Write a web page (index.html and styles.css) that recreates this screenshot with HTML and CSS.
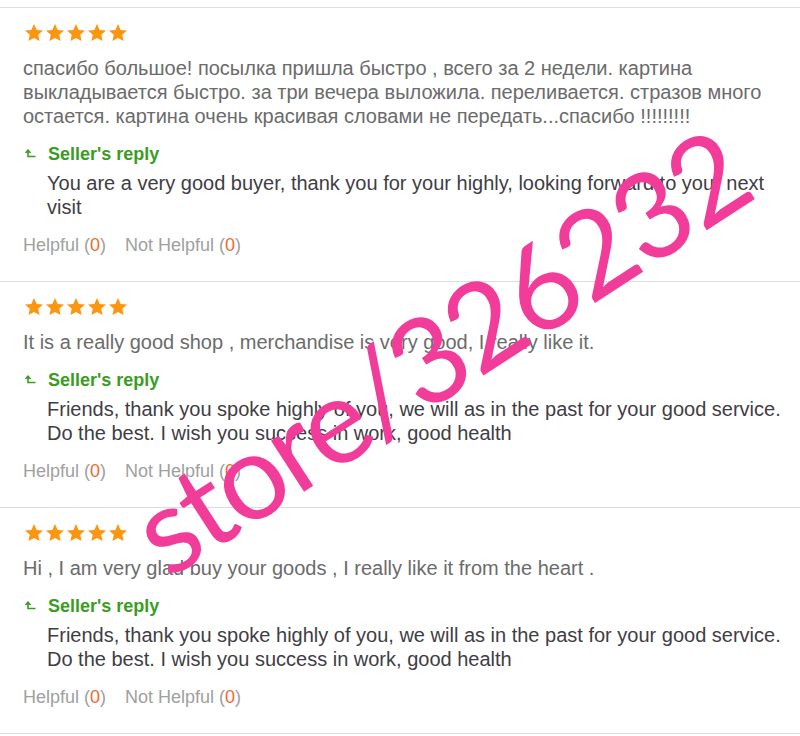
FILE: index.html
```html
<!DOCTYPE html>
<html lang="en">
<head>
<meta charset="UTF-8">
<meta name="viewport" content="width=device-width, initial-scale=1.0">
<title>Feedback</title>
<link rel="stylesheet" href="styles.css">
</head>
<body>
<div class="feedback-list">

  <div class="review">
    <div class="stars">
      <svg viewBox="0 0 20 20"><path d="M10 1l2.7 5.9 6.3.6-4.8 4.3 1.4 6.3L10 14.9 4.4 18.1l1.4-6.3L1 7.5l6.3-.6z"/></svg>
      <svg viewBox="0 0 20 20"><path d="M10 1l2.7 5.9 6.3.6-4.8 4.3 1.4 6.3L10 14.9 4.4 18.1l1.4-6.3L1 7.5l6.3-.6z"/></svg>
      <svg viewBox="0 0 20 20"><path d="M10 1l2.7 5.9 6.3.6-4.8 4.3 1.4 6.3L10 14.9 4.4 18.1l1.4-6.3L1 7.5l6.3-.6z"/></svg>
      <svg viewBox="0 0 20 20"><path d="M10 1l2.7 5.9 6.3.6-4.8 4.3 1.4 6.3L10 14.9 4.4 18.1l1.4-6.3L1 7.5l6.3-.6z"/></svg>
      <svg viewBox="0 0 20 20"><path d="M10 1l2.7 5.9 6.3.6-4.8 4.3 1.4 6.3L10 14.9 4.4 18.1l1.4-6.3L1 7.5l6.3-.6z"/></svg>
    </div>
    <p class="review-text">спасибо большое! посылка пришла быстро , всего за 2 недели. картина выкладывается быстро. за три вечера выложила. переливается. стразов много остается. картина очень красивая словами не передать...спасибо !!!!!!!!!</p>
    <div class="reply-title">
      <svg class="reply-icon" viewBox="0 0 12 10"><path d="M1.5 4L4 1.3 6.5 4M4 1.5V7.5H11.5"/></svg>
      Seller's reply
    </div>
    <p class="reply-text">You are a very good buyer, thank you for your highly, looking forward to your next visit</p>
    <div class="helpful">Helpful (<span class="count">0</span>)<span class="gap"></span>Not Helpful (<span class="count">0</span>)</div>
  </div>

  <div class="review">
    <div class="stars">
      <svg viewBox="0 0 20 20"><path d="M10 1l2.7 5.9 6.3.6-4.8 4.3 1.4 6.3L10 14.9 4.4 18.1l1.4-6.3L1 7.5l6.3-.6z"/></svg>
      <svg viewBox="0 0 20 20"><path d="M10 1l2.7 5.9 6.3.6-4.8 4.3 1.4 6.3L10 14.9 4.4 18.1l1.4-6.3L1 7.5l6.3-.6z"/></svg>
      <svg viewBox="0 0 20 20"><path d="M10 1l2.7 5.9 6.3.6-4.8 4.3 1.4 6.3L10 14.9 4.4 18.1l1.4-6.3L1 7.5l6.3-.6z"/></svg>
      <svg viewBox="0 0 20 20"><path d="M10 1l2.7 5.9 6.3.6-4.8 4.3 1.4 6.3L10 14.9 4.4 18.1l1.4-6.3L1 7.5l6.3-.6z"/></svg>
      <svg viewBox="0 0 20 20"><path d="M10 1l2.7 5.9 6.3.6-4.8 4.3 1.4 6.3L10 14.9 4.4 18.1l1.4-6.3L1 7.5l6.3-.6z"/></svg>
    </div>
    <p class="review-text">It is a really good shop , merchandise is very good, I really like it.</p>
    <div class="reply-title">
      <svg class="reply-icon" viewBox="0 0 12 10"><path d="M1.5 4L4 1.3 6.5 4M4 1.5V7.5H11.5"/></svg>
      Seller's reply
    </div>
    <p class="reply-text">Friends, thank you spoke highly of you, we will as in the past for your good service. Do the best. I wish you success in work, good health</p>
    <div class="helpful">Helpful (<span class="count">0</span>)<span class="gap"></span>Not Helpful (<span class="count">0</span>)</div>
  </div>

  <div class="review">
    <div class="stars">
      <svg viewBox="0 0 20 20"><path d="M10 1l2.7 5.9 6.3.6-4.8 4.3 1.4 6.3L10 14.9 4.4 18.1l1.4-6.3L1 7.5l6.3-.6z"/></svg>
      <svg viewBox="0 0 20 20"><path d="M10 1l2.7 5.9 6.3.6-4.8 4.3 1.4 6.3L10 14.9 4.4 18.1l1.4-6.3L1 7.5l6.3-.6z"/></svg>
      <svg viewBox="0 0 20 20"><path d="M10 1l2.7 5.9 6.3.6-4.8 4.3 1.4 6.3L10 14.9 4.4 18.1l1.4-6.3L1 7.5l6.3-.6z"/></svg>
      <svg viewBox="0 0 20 20"><path d="M10 1l2.7 5.9 6.3.6-4.8 4.3 1.4 6.3L10 14.9 4.4 18.1l1.4-6.3L1 7.5l6.3-.6z"/></svg>
      <svg viewBox="0 0 20 20"><path d="M10 1l2.7 5.9 6.3.6-4.8 4.3 1.4 6.3L10 14.9 4.4 18.1l1.4-6.3L1 7.5l6.3-.6z"/></svg>
    </div>
    <p class="review-text">Hi , I am very glad buy your goods , I really like it from the heart .</p>
    <div class="reply-title">
      <svg class="reply-icon" viewBox="0 0 12 10"><path d="M1.5 4L4 1.3 6.5 4M4 1.5V7.5H11.5"/></svg>
      Seller's reply
    </div>
    <p class="reply-text">Friends, thank you spoke highly of you, we will as in the past for your good service. Do the best. I wish you success in work, good health</p>
    <div class="helpful">Helpful (<span class="count">0</span>)<span class="gap"></span>Not Helpful (<span class="count">0</span>)</div>
  </div>

</div>
<div class="watermark">store/326232</div>
</body>
</html>
```

FILE: styles.css
```css
body {
  margin: 0;
  padding-top: 7px;
  background-color: #fff;
  font-family: 'Liberation Sans', Arial, sans-serif;
  font-size: 18px;
  line-height: 24px;
  overflow: hidden;
}
.feedback-list {
  border-bottom: 1px solid #dcdcdc;
}
.review {
  border-top: 1px solid #dcdcdc;
  padding: 16px 8px 24px 23px;
}
.stars {
  display: flex;
  gap: 1px;
  height: 19px;
  margin-left: 1px;
}
.stars svg {
  width: 20px;
  height: 20px;
  margin-top: -1px;
  fill: #fb9611;
}
.review-text {
  margin: 13px 0 0;
  font-size: 20px;
  color: #6b6b6b;
}
.reply-title {
  display: flex;
  align-items: center;
  margin-top: 14px;
  color: #3a9d23;
  font-weight: bold;
}
.reply-icon {
  width: 12px;
  height: 10px;
  margin: 0 12px 0 1px;
  fill: none;
  stroke: #3a9d23;
  stroke-width: 1.6;
}
.reply-text {
  margin: 5px 0 0 24px;
  font-size: 20px;
  color: #3f3d45;
}
.helpful {
  margin-top: 14px;
  color: #a0a0a0;
}
.helpful .count {
  color: #f5662f;
}
.helpful .gap {
  display: inline-block;
  width: 19px;
}
.watermark {
  position: absolute;
  left: 438px;
  top: 350px;
  transform: translate(-50%, -50%) rotate(-33deg);
  font-family: Lato, sans-serif;
  font-size: 120px;
  letter-spacing: -3px;
  line-height: 1;
  color: #f23c9a;
  white-space: nowrap;
  pointer-events: none;
}
```
